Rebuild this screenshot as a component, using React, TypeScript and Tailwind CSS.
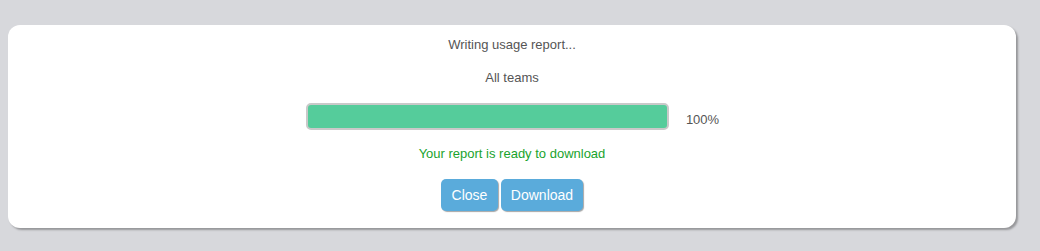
export default function App() {
  return (
    <div
      className="w-[1040px] h-[251px] bg-[#d7d8dc] pt-[25px] pl-[8px] pr-[24px]"
      style={{ fontFamily: '"Liberation Sans", Arial, sans-serif' }}
    >
      <div className="h-[203px] bg-white rounded-[12px] shadow-[2px_2px_2px_rgba(0,0,0,0.3)] flex flex-col items-center pt-[12px]">
        <div className="text-[13px] leading-[16px] text-[#555]">Writing usage report...</div>
        <div className="mt-[17px] text-[13px] leading-[16px] text-[#555]">All teams</div>
        <div className="mt-[17px] flex items-center gap-[17px] pl-[1px]">
          <div className="w-[363px] h-[27px] rounded-[5px] border-2 border-[#c9c9c9] bg-[#55cc9b]" />
          <div className="text-[13px] leading-[16px] text-[#555] pt-[7px]">100%</div>
        </div>
        <div className="mt-[16px] text-[13px] leading-[16px] text-[#1aa32d]">Your report is ready to download</div>
        <div className="mt-[17px] flex gap-[3px]">
          <button className="h-[32px] w-[57px] rounded-[5px] bg-[#5aabdb] text-white text-[14px] shadow-[1px_1px_1px_rgba(0,0,0,0.35)]">
            Close
          </button>
          <button className="h-[32px] w-[82px] rounded-[5px] bg-[#5aabdb] text-white text-[14px] shadow-[1px_1px_1px_rgba(0,0,0,0.35)]">
            Download
          </button>
        </div>
      </div>
    </div>
  );
}
